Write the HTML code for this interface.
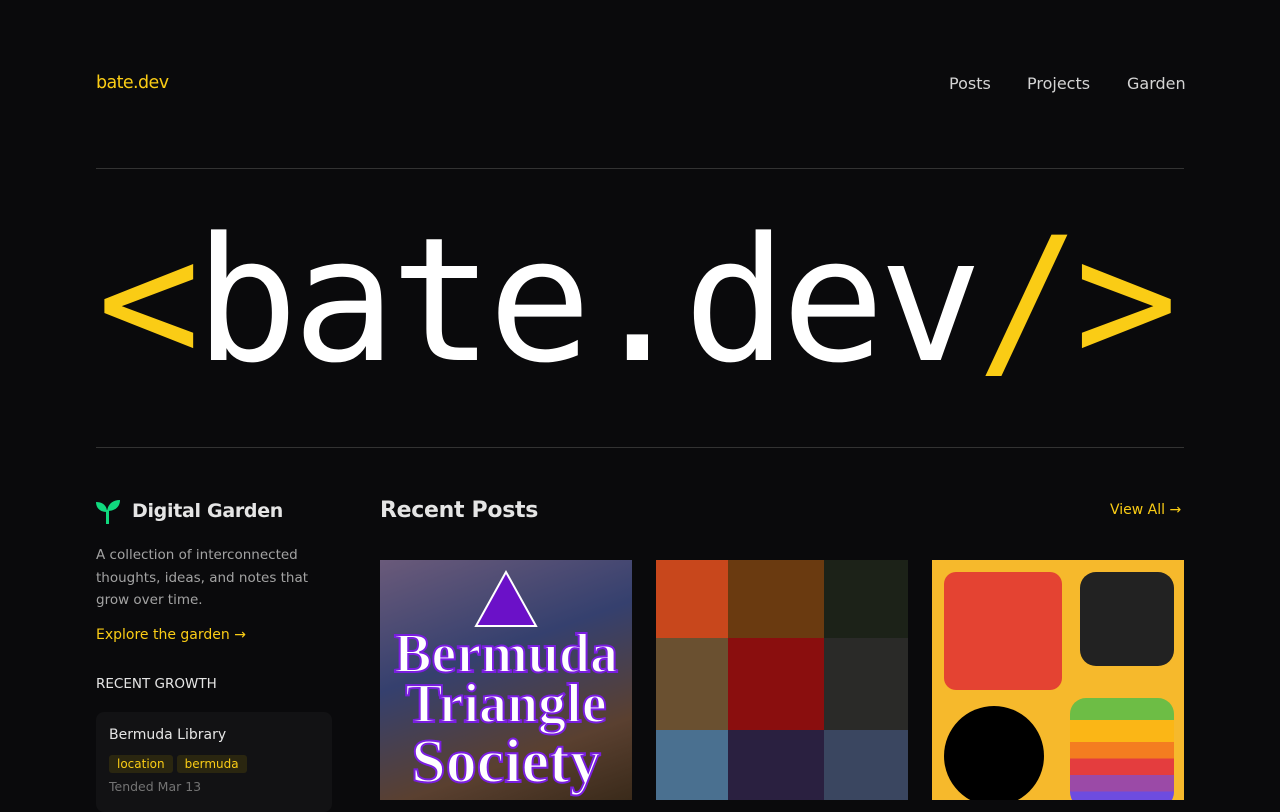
<!DOCTYPE html>
<html><head><meta charset="utf-8"><style>
*{margin:0;padding:0;box-sizing:border-box}
body{width:1280px;height:800px;overflow:hidden;background:#0a0a0c;font-family:"DejaVu Sans","Liberation Sans",sans-serif;color:#e5e5e5;position:relative}
.a{position:absolute}
.logo{left:96px;top:73px;font-size:17.5px;color:#facc15;letter-spacing:-0.6px}
.nav{top:74px;font-size:16px;color:#d4d4d4}
.hr{left:96px;width:1088px;height:1px;background:#333}
.hero{left:97px;top:215px;font-family:"DejaVu Sans Mono",monospace;font-size:172px;line-height:172px;color:#fff;white-space:nowrap;letter-spacing:-5.8px}
.y{color:#facc15}
.card{top:560px;width:252px;height:240px;overflow:hidden}
.tag{display:inline-block;background:#2a2610;color:#facc15;font-size:12px;padding:2px 8px;border-radius:3px;margin-right:4px}
</style></head><body>
<div class="a logo">bate.dev</div>
<div class="a nav" style="left:949px">Posts</div>
<div class="a nav" style="left:1027px">Projects</div>
<div class="a nav" style="left:1127px">Garden</div>
<div class="a hr" style="top:168px"></div>
<div class="a hero"><span class="y">&lt;</span>bate.dev<span class="y">/&gt;</span></div>
<div class="a hr" style="top:447px"></div>

<svg class="a" style="left:96px;top:500px" width="25" height="24" viewBox="0 0 25 24"><path d="M11 24V12C11 5 6 2 0 2c0 6 4 10 11 10" fill="#10d97e"/><path d="M11 13C11 5 16 0 24 0c0 7-5 11-13 11z" fill="#10d97e"/><rect x="10" y="10" width="3" height="14" fill="#10d97e"/></svg>
<div class="a" style="left:132px;top:500px;font-size:19px;font-weight:bold;color:#e5e5e5;letter-spacing:-0.3px">Digital Garden</div>
<div class="a" style="left:96px;top:544px;width:240px;font-size:13.5px;line-height:22.5px;color:#a3a3a3">A collection of interconnected thoughts, ideas, and notes that grow over time.</div>
<div class="a" style="left:96px;top:627px;font-size:14px;color:#facc15">Explore the garden →</div>
<div class="a" style="left:96px;top:676px;font-size:13.5px;color:#e5e5e5">RECENT GROWTH</div>
<div class="a" style="left:96px;top:712px;width:236px;height:100px;background:#121214;border-radius:8px;padding:15px 13px">
<div style="font-size:14px;color:#e5e5e5">Bermuda Library</div>
<div style="margin-top:10px"><span class="tag">location</span><span class="tag">bermuda</span></div>
<div style="margin-top:6px;font-size:12.5px;color:#737373">Tended Mar 13</div>
</div>

<div class="a" style="left:380px;top:498px;font-size:22px;font-weight:bold;color:#e5e5e5;letter-spacing:-0.3px">Recent Posts</div>
<div class="a" style="left:1110px;top:502px;font-size:14px;color:#facc15">View All →</div>

<div class="a card" style="left:380px;background:linear-gradient(160deg,#6a5a7a,#35406e 40%,#5a4030 75%,#3a2a1a)">
<svg width="252" height="240"><polygon points="126,12 96,66 156,66" fill="#6b11c8" stroke="#fff" stroke-width="2"/>
<text x="126" y="112" text-anchor="middle" font-family="Liberation Serif" font-weight="bold" font-size="56" fill="#fff" stroke="#7a1ee0" stroke-width="2">Bermuda</text>
<text x="126" y="162" text-anchor="middle" font-family="Liberation Serif" font-weight="bold" font-size="56" fill="#fff" stroke="#7a1ee0" stroke-width="2">Triangle</text>
<text x="126" y="222" text-anchor="middle" font-family="Liberation Serif" font-weight="bold" font-size="62" fill="#fff" stroke="#7a1ee0" stroke-width="2">Society</text></svg>
</div>

<div class="a card" style="left:656px">
<div style="display:grid;grid-template-columns:72px 96px 84px;grid-template-rows:78px 92px 70px;height:240px">
<div style="background:#c8471c"></div><div style="background:#6a3a10"></div><div style="background:#1c2218"></div>
<div style="background:#6a5030"></div><div style="background:#8a0e0e"></div><div style="background:#2a2a28"></div>
<div style="background:#4a7090"></div><div style="background:#2a2040"></div><div style="background:#3a4660"></div>
</div></div>

<div class="a card" style="left:932px;background:#f6b92c">
<div class="a" style="left:12px;top:12px;width:118px;height:118px;background:#e44332;border-radius:12px"></div>
<div class="a" style="left:148px;top:12px;width:94px;height:94px;background:#222;border-radius:16px"></div>
<div class="a" style="left:12px;top:146px;width:100px;height:100px;background:#000;border-radius:50%"></div>
<div class="a" style="left:138px;top:138px;width:104px;height:110px;border-radius:16px;background:linear-gradient(#6dbd45 0 20%,#fbb616 20% 40%,#f47d20 40% 55%,#e43d3e 55% 70%,#9b4aa7 70% 85%,#6d4ce0 85%)"></div>
</div>
</body></html>
